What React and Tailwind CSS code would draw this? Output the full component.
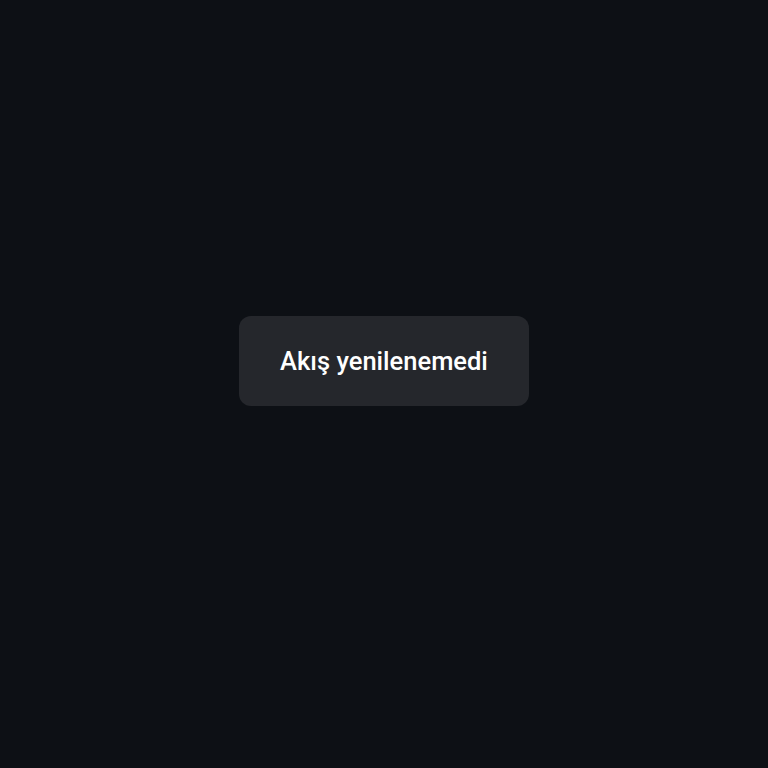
import React from 'react'

export default function App() {
  return (
    <div className="w-full h-[768px] bg-[#0d1015] flex items-center justify-center font-['Roboto',sans-serif]">
      <div className="bg-[#25272c] rounded-xl px-[41px] py-[27px] mb-[46px]">
        <p className="text-white text-[25.5px] leading-[36px] font-medium whitespace-nowrap">Akış yenilenemedi</p>
      </div>
    </div>
  )
}
